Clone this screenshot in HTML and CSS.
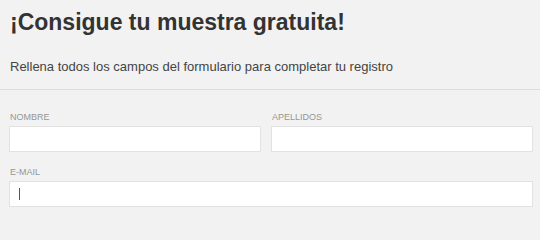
FILE: index.html
```html
<!DOCTYPE html>
<html lang="es">
<head>
<meta charset="utf-8">
<title>Muestra gratuita</title>
<link rel="stylesheet" href="styles.css">
</head>
<body>
<header class="intro">
  <h1 class="title">¡Consigue tu muestra gratuita!</h1>
  <p class="lead">Rellena todos los campos del formulario para completar tu registro</p>
</header>
<hr class="divider">
<form class="form">
  <div class="row row-two">
    <div class="field">
      <label class="label" for="nombre">NOMBRE</label>
      <input class="input" id="nombre" type="text">
    </div>
    <div class="field">
      <label class="label" for="apellidos">APELLIDOS</label>
      <input class="input" id="apellidos" type="text">
    </div>
  </div>
  <div class="row">
    <div class="field">
      <label class="label" for="email">E-MAIL</label>
      <div class="input-wrap">
        <input class="input" id="email" type="email">
        <span class="caret"></span>
      </div>
    </div>
  </div>
</form>
</body>
</html>
```
FILE: styles.css
```css
html, body {
  margin: 0;
  padding: 0;
}
body {
  background: #f2f2f2;
  font-family: "Liberation Sans", Arial, sans-serif;
  width: 540px;
  height: 212px;
  overflow: hidden;
}
.intro {
  padding: 9px 10px 0;
}
.title {
  margin: 0;
  font-size: 23px;
  line-height: 26px;
  font-weight: bold;
  color: #333333;
}
.lead {
  margin: 24px 0 0;
  font-size: 13px;
  line-height: 16px;
  color: #444444;
}
.divider {
  margin: 14px 0 0;
  border: 0;
  border-top: 1px solid #dcdcdc;
  height: 0;
}
.form {
  padding: 22px 7px 0 9px;
}
.row {
  display: grid;
  grid-template-columns: 1fr;
}
.row + .row {
  margin-top: 15px;
}
.row-two {
  grid-template-columns: 252px 1fr;
  column-gap: 10px;
}
.field {
  display: flex;
  flex-direction: column;
}
.label {
  font-size: 9px;
  line-height: 11px;
  color: #969696;
  padding-left: 1px;
  margin-bottom: 3px;
}
.input {
  box-sizing: border-box;
  width: 100%;
  height: 26px;
  margin: 0;
  padding: 0 9px;
  background: #ffffff;
  border: 1px solid #e2e2e2;
  border-radius: 0;
  outline: none;
  font-family: inherit;
  font-size: 13px;
}
.input-wrap {
  position: relative;
}
.caret {
  position: absolute;
  left: 10px;
  top: 7px;
  width: 1px;
  height: 12px;
  background: #555555;
}
```
